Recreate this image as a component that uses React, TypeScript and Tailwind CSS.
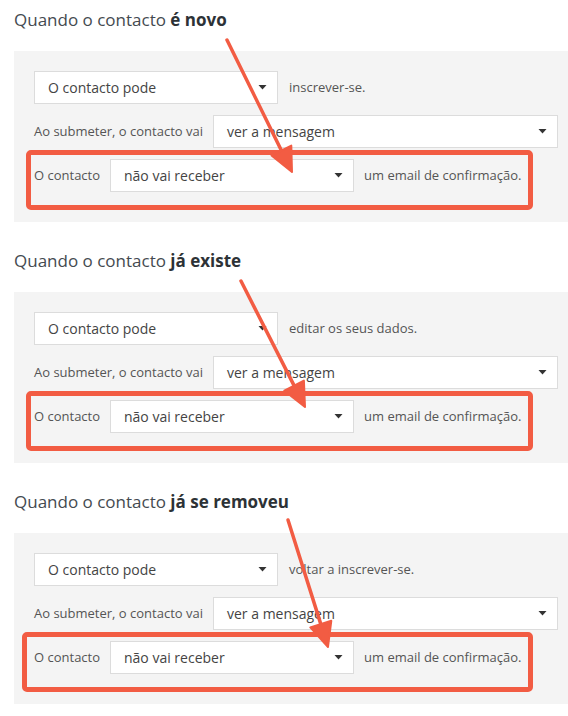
import React from "react";

const sections = [
  { bold: "é novo", action: "inscrever-se.", boxClass: "-ml-2 pl-1 w-[507px]" },
  { bold: "já existe", action: "editar os seus dados.", boxClass: "-ml-2 pl-1 w-[507px]" },
  { bold: "já se removeu", action: "voltar a inscrever-se.", boxClass: "-ml-3 pl-2 w-[511px]" },
];

function Caret() {
  return (
    <svg width="9" height="5" viewBox="0 0 9 5" className="shrink-0">
      <path d="M0.5 0h8L4.5 4.5z" fill="#333" />
    </svg>
  );
}

function FakeSelect({ value, className }: { value: string; className?: string }) {
  return (
    <div
      className={
        "h-[33px] bg-white border border-[#dcdcdc] flex items-center justify-between pl-[13px] pr-[10px] text-[14px] text-[#444] shrink-0 " +
        (className ?? "")
      }
    >
      <span>{value}</span>
      <Caret />
    </div>
  );
}

function Arrows() {
  // annotation arrows drawn over the form
  const arrows = [
    { line: [227, 40, 281.4, 150.5], head: "271.5,155.4 291.3,145.6 292,172" },
    { line: [241, 281, 294.1, 385.6], head: "284.3,390.6 303.9,380.6 305,407" },
    { line: [288, 520, 320.8, 624.1], head: "310.3,627.4 331.3,620.8 328,647" },
  ];
  return (
    <svg className="absolute inset-0 pointer-events-none" width="568" height="716">
      {arrows.map((a, i) => (
        <g key={i}>
          <line
            x1={a.line[0]}
            y1={a.line[1]}
            x2={a.line[2]}
            y2={a.line[3]}
            stroke="#f25c43"
            strokeWidth="3.5"
            strokeLinecap="round"
          />
          <polygon points={a.head} fill="#f25c43" stroke="#f25c43" strokeWidth="2" strokeLinejoin="round" />
        </g>
      ))}
    </svg>
  );
}

export default function App() {
  return (
    <div
      className="relative w-[568px] h-[716px] overflow-hidden bg-white pl-[14px] pt-[8px]"
      style={{ fontFamily: '"Open Sans", "Noto Sans", sans-serif' }}
    >
      {sections.map((s, idx) => (
        <div key={idx} className={idx > 0 ? "mt-[27px]" : ""}>
          <h2 className="h-[24px] leading-[24px] text-[17px] text-[#444a50] font-normal">
            Quando o contacto <span className="font-bold text-[#2d3236]">{s.bold}</span>
          </h2>
          <div className="mt-[19px] bg-[#f4f4f4] h-[171px] pt-[20px] pl-[20px] text-[13px] text-[#555]">
            <div className="flex items-center">
              <FakeSelect value="O contacto pode" className="w-[244px]" />
              <span className="ml-[11px]">{s.action}</span>
            </div>
            <div className="flex items-center mt-[11px]">
              <span>Ao submeter, o contacto vai</span>
              <FakeSelect value="ver a mensagem" className="w-[345px] ml-auto mr-[10px]" />
            </div>
            <div
              className={
                "mt-[2px] h-[60px] border-[5px] border-[#f25c43] rounded-[5px] pt-[4px] flex items-start " +
                s.boxClass
              }
            >
              <div className="flex items-center -ml-px">
                <span className="w-[76px]">O contacto</span>
                <FakeSelect value="não vai receber" className="w-[244px]" />
                <span className="ml-[10px]">um email de confirmação.</span>
              </div>
            </div>
          </div>
        </div>
      ))}
      <Arrows />
    </div>
  );
}
